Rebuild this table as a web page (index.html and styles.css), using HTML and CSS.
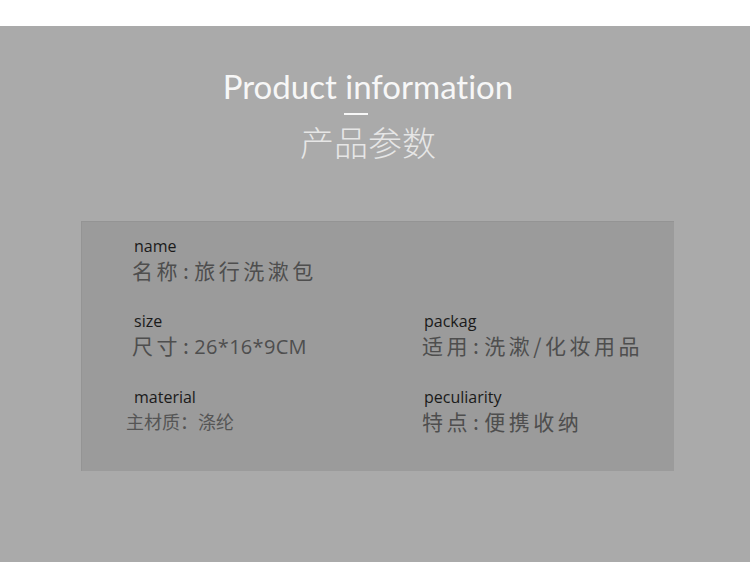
FILE: index.html
```html
<!DOCTYPE html>
<html lang="zh-CN">
<head>
<meta charset="utf-8">
<title>Product information</title>
<link rel="stylesheet" href="styles.css">
</head>
<body>
<section class="page">
  <header class="heading">
    <h1 class="title">Product information</h1>
    <div class="dash"></div>
    <h2 class="subtitle">产品参数</h2>
  </header>
  <div class="panel">
    <div class="grid">
      <div class="item">
        <div class="label">name</div>
        <div class="value">名称<span class="colon">:</span>旅行洗漱包</div>
      </div>
      <div class="item empty"></div>
      <div class="item">
        <div class="label">size</div>
        <div class="value">尺寸<span class="colon">:</span><span class="latin">26*16*9CM</span></div>
      </div>
      <div class="item">
        <div class="label">packag</div>
        <div class="value">适用<span class="colon">:</span>洗漱/化妆用品</div>
      </div>
      <div class="item">
        <div class="label">material</div>
        <div class="value value-sans">主材质：涤纶</div>
      </div>
      <div class="item">
        <div class="label">peculiarity</div>
        <div class="value">特点<span class="colon">:</span>便携收纳</div>
      </div>
    </div>
  </div>
</section>
</body>
</html>
```
FILE: styles.css
```css
html, body {
  margin: 0;
  padding: 0;
  background: #ffffff;
}
body {
  width: 750px;
  height: 570px;
  overflow: hidden;
  font-family: "Lato", "Noto Sans CJK SC", sans-serif;
}
.page {
  margin-top: 26px;
  height: 536px;
  background: #aaaaaa;
  padding-top: 40px;
  box-sizing: border-box;
}
.heading {
  display: flex;
  flex-direction: column;
  align-items: center;
  padding-right: 14px;
}
.title {
  margin: 0;
  font-family: "Lato", sans-serif;
  font-weight: 400;
  font-size: 33px;
  line-height: 40px;
  color: #f7f7f7;
  letter-spacing: 0;
  font-variant-ligatures: none;
}
.dash {
  width: 24px;
  height: 2px;
  background: #f7f7f7;
  margin-top: 7px;
  margin-right: 24px;
}
.subtitle {
  margin: 10px 0 0;
  font-family: "Noto Sans CJK SC", sans-serif;
  font-weight: 300;
  font-size: 34px;
  line-height: 34px;
  color: #e6e6e6;
}
.panel {
  margin: 62px 0 0 81px;
  width: 593px;
  height: 250px;
  box-sizing: border-box;
  background: #9b9b9b;
  border-top: 1px solid #949494;
  border-left: 1px solid #949494;
  padding: 15px 0 0 52px;
}
.grid {
  display: grid;
  grid-template-columns: 290px 1fr;
  row-gap: 29px;
}
.label {
  font-family: "Open Sans", sans-serif;
  font-size: 16px;
  line-height: 19px;
  color: #1a1a1a;
}
.value {
  margin-top: 2px;
  margin-left: -2px;
  font-family: "Noto Sans CJK SC", sans-serif;
  font-size: 21px;
  line-height: 25px;
  letter-spacing: 3.5px;
  color: #4e4e4e;
  white-space: nowrap;
}
.colon {
  margin: 0 2px;
}
.latin {
  font-family: "Open Sans", sans-serif;
  font-size: 20px;
  letter-spacing: 0.3px;
}
.value-sans {
  margin-left: -8px;
  font-size: 18px;
  letter-spacing: 0;
  color: #555555;
}
```
